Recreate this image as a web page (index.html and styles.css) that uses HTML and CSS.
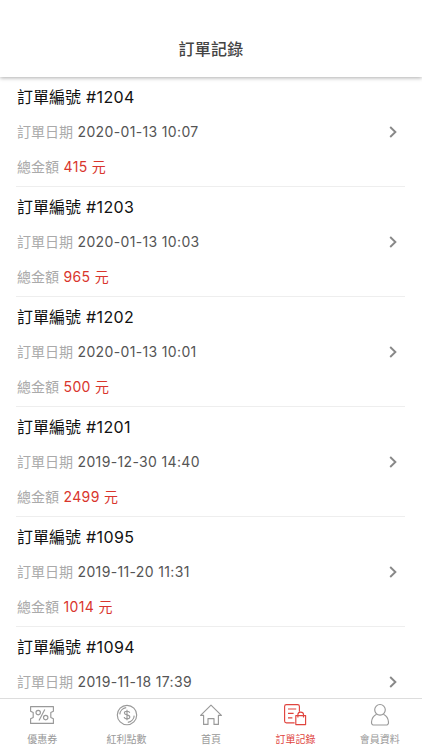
FILE: index.html
```html
<!DOCTYPE html>
<html lang="zh-Hant">
<head>
    <meta charset="UTF-8">
    <meta name="viewport" content="width=device-width, initial-scale=1.0">
    <title>訂單記錄</title>
    <link rel="stylesheet" href="styles.css">
</head>
<body>
    <header class="header">
        <h1>訂單記錄</h1>
    </header>

    <main class="order-list">
        <div class="order">
            <div class="order-info">
                <div class="order-no">訂單編號 <span>#1204</span></div>
                <div class="order-date">訂單日期 <span>2020-01-13 10:07</span></div>
                <div class="order-total">總金額 <span>415 元</span></div>
            </div>
            <svg class="arrow" viewBox="0 0 8 12"><path d="M1.2 1L6.4 6L1.2 11"/></svg>
        </div>
        <div class="order">
            <div class="order-info">
                <div class="order-no">訂單編號 <span>#1203</span></div>
                <div class="order-date">訂單日期 <span>2020-01-13 10:03</span></div>
                <div class="order-total">總金額 <span>965 元</span></div>
            </div>
            <svg class="arrow" viewBox="0 0 8 12"><path d="M1.2 1L6.4 6L1.2 11"/></svg>
        </div>
        <div class="order">
            <div class="order-info">
                <div class="order-no">訂單編號 <span>#1202</span></div>
                <div class="order-date">訂單日期 <span>2020-01-13 10:01</span></div>
                <div class="order-total">總金額 <span>500 元</span></div>
            </div>
            <svg class="arrow" viewBox="0 0 8 12"><path d="M1.2 1L6.4 6L1.2 11"/></svg>
        </div>
        <div class="order">
            <div class="order-info">
                <div class="order-no">訂單編號 <span>#1201</span></div>
                <div class="order-date">訂單日期 <span>2019-12-30 14:40</span></div>
                <div class="order-total">總金額 <span>2499 元</span></div>
            </div>
            <svg class="arrow" viewBox="0 0 8 12"><path d="M1.2 1L6.4 6L1.2 11"/></svg>
        </div>
        <div class="order">
            <div class="order-info">
                <div class="order-no">訂單編號 <span>#1095</span></div>
                <div class="order-date">訂單日期 <span>2019-11-20 11:31</span></div>
                <div class="order-total">總金額 <span>1014 元</span></div>
            </div>
            <svg class="arrow" viewBox="0 0 8 12"><path d="M1.2 1L6.4 6L1.2 11"/></svg>
        </div>
        <div class="order">
            <div class="order-info">
                <div class="order-no">訂單編號 <span>#1094</span></div>
                <div class="order-date">訂單日期 <span>2019-11-18 17:39</span></div>
            </div>
            <svg class="arrow" viewBox="0 0 8 12"><path d="M1.2 1L6.4 6L1.2 11"/></svg>
        </div>
    </main>

    <nav class="tabbar">
        <a class="tab">
            <svg viewBox="0 0 24 24">
                <path d="M.6 3.6H23.4V8.2L20.8 9.6V14.4L23.4 15.8V20.4H.6V15.8L3.2 14.4V9.6L.6 8.2Z"/>
                <path d="M14.8 6.6L9 17.4"/>
                <circle cx="8.2" cy="9.6" r="2.2"/>
                <circle cx="15.7" cy="14.6" r="2.2"/>
            </svg>
            <span>優惠券</span>
        </a>
        <a class="tab">
            <svg viewBox="0 0 24 24">
                <circle cx="12" cy="12" r="9.7"/>
                <path d="M4.8 11.4A7.3 7.3 0 0 1 11.2 4.6M19.2 12.6A7.3 7.3 0 0 1 12.8 19.4"/>
                <path d="M14.7 9.8C14.5 8.7 13.5 8.2 12 8.2C10.4 8.2 9.4 8.9 9.4 10C9.4 12.6 14.8 11.2 14.8 14C14.8 15.2 13.6 15.9 12 15.9C10.4 15.9 9.4 15.2 9.2 14M12 6.8V17.3"/>
            </svg>
            <span>紅利點數</span>
        </a>
        <a class="tab">
            <svg viewBox="0 0 24 24">
                <path d="M12 2.1L1.6 12.4H4.6V21.4H9V15.6H15V21.4H19.4V12.4H22.4Z"/>
            </svg>
            <span>首頁</span>
        </a>
        <a class="tab active">
            <svg viewBox="0 0 24 24">
                <path d="M11.6 19.8H3.4Q1.6 19.8 1.6 18V3.4Q1.6 1.6 3.4 1.6H14.6Q16.4 1.6 16.4 3.4V8.8"/>
                <path d="M5 6H13.2M5 10.4H10.6M5 14.8H9.4"/>
                <path d="M12.8 12.6H22.6V21.6H12.8ZM14.9 14.4V11.6Q14.9 9.1 17.7 9.1Q20.5 9.1 20.5 11.6V14.4"/>
            </svg>
            <span>訂單記錄</span>
        </a>
        <a class="tab">
            <svg viewBox="0 0 24 24">
                <circle cx="12" cy="6.8" r="5.3"/>
                <path d="M8.6 11.3C5.4 12.8 3.7 15.6 3.5 19.3Q3.4 22 6.2 22H17.8Q20.6 22 20.5 19.3C20.3 15.6 18.6 12.8 15.4 11.3"/>
            </svg>
            <span>會員資料</span>
        </a>
    </nav>
</body>
</html>
```

FILE: styles.css
```css
body, html {
    margin: 0;
    padding: 0;
    height: 100%;
    overflow: hidden;
}
body {
    display: flex;
    flex-direction: column;
    background: #fff;
    font-family: Inter, "Noto Sans CJK TC", sans-serif;
}
.header {
    position: relative;
    z-index: 1;
    flex: none;
    height: 77px;
    box-sizing: border-box;
    padding-top: 22px;
    background: #fff;
    box-shadow: 0 1px 4px rgba(0, 0, 0, 0.32);
}
.header h1 {
    margin: 0;
    text-align: center;
    font-size: 16px;
    font-weight: 500;
    line-height: 55px;
    letter-spacing: 0.2px;
    color: #444;
}
.order-list {
    flex: 1;
    min-height: 0;
    overflow: hidden;
    padding: 0 17px 0 16px;
}
.order {
    display: flex;
    justify-content: space-between;
    align-items: center;
    height: 110px;
    box-sizing: border-box;
    padding: 3px 8px 3px 1px;
    border-bottom: 1px solid #eee;
}
.order-info {
    align-self: flex-start;
    white-space: nowrap;
}
.order-info div {
    height: 35px;
    line-height: 34px;
    font-size: 14px;
    color: #aaa;
}
.order-info .order-no {
    line-height: 35px;
    font-size: 16px;
    color: #111;
}
.order-info span {
    margin-left: 0.6px;
    letter-spacing: 0.35px;
}
.order-date span {
    color: #555;
}
.order-total span {
    color: #d9352d;
}
.arrow {
    width: 8px;
    height: 12px;
    fill: none;
    stroke: #888;
    stroke-width: 1.9;
}
.tabbar {
    display: flex;
    flex: none;
    height: 52px;
    box-sizing: border-box;
    border-top: 1px solid #ddd;
    background: #fff;
}
.tab {
    flex: 1;
    display: flex;
    flex-direction: column;
    align-items: center;
    padding-top: 4px;
    color: #999;
}
.tab svg {
    width: 24px;
    height: 24px;
    fill: none;
    stroke: currentColor;
    stroke-width: 1.15;
    stroke-linejoin: round;
}
.tab span {
    font-size: 10px;
    line-height: 14px;
    margin-top: 5px;
}
.tab.active {
    color: #e0443e;
}
```
